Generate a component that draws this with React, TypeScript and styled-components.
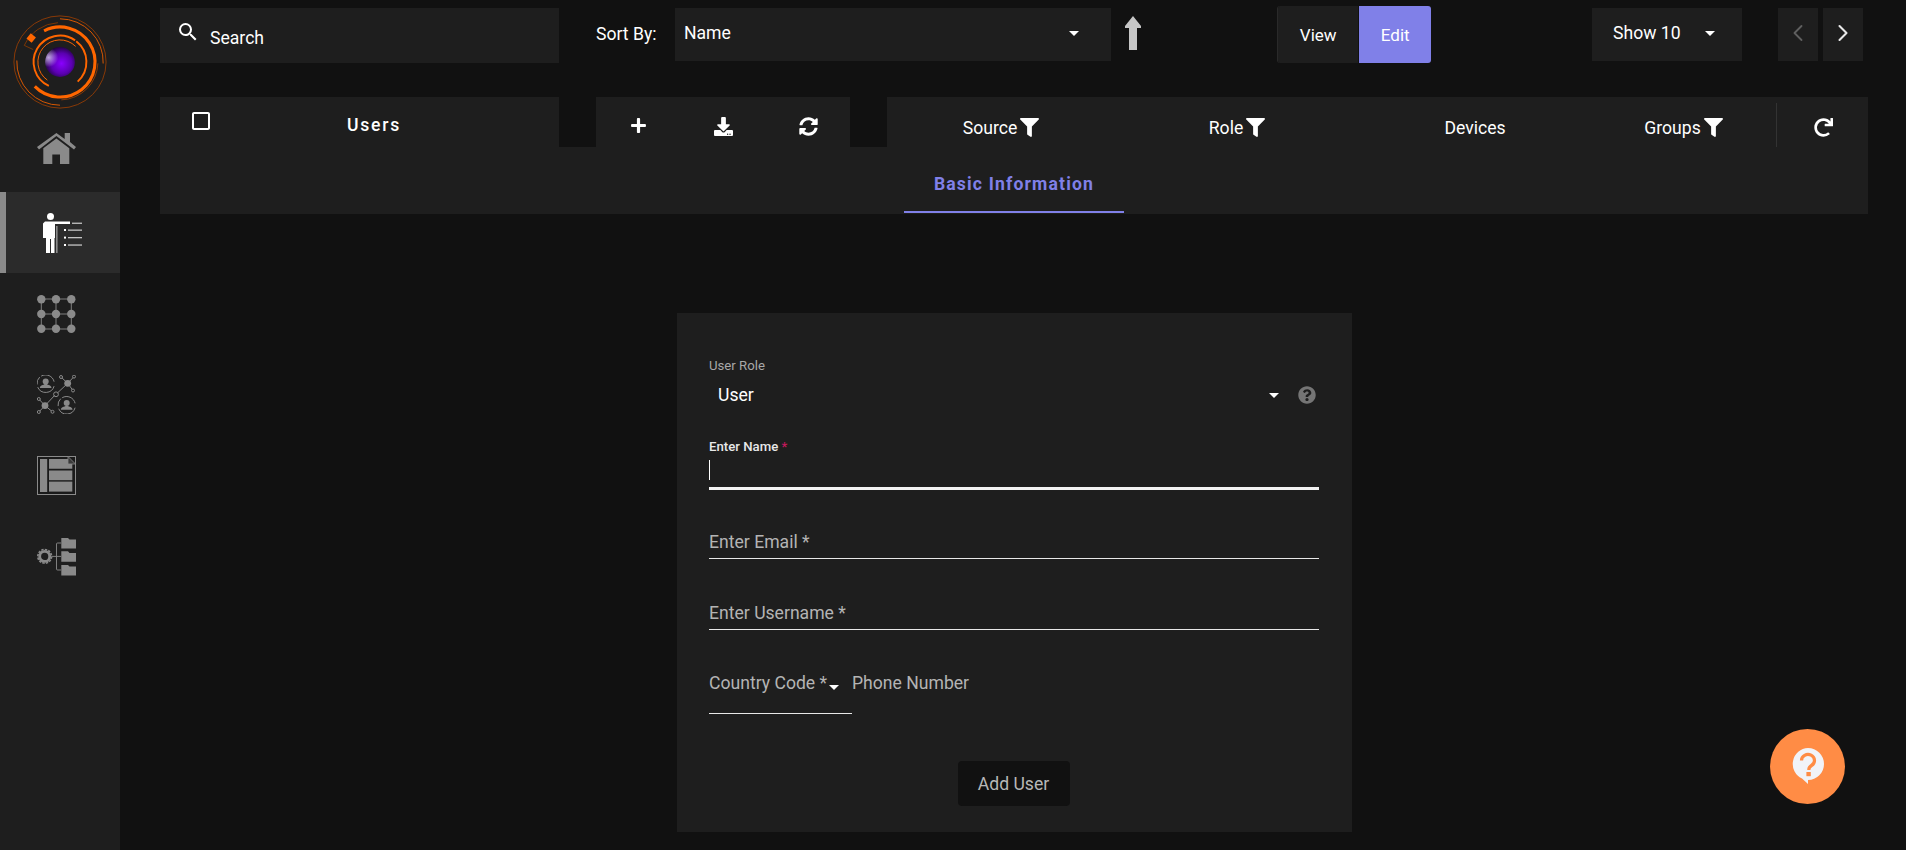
import React from 'react';
import styled, { createGlobalStyle } from 'styled-components';
import { FaDownload, FaFilter, FaPlus, FaQuestionCircle, FaRedo, FaSyncAlt } from 'react-icons/fa';
import { MdArrowDropDown, MdCheckBoxOutlineBlank, MdSearch } from 'react-icons/md';
import { ChevronLeft, ChevronRight } from 'lucide-react';

const GlobalStyle = createGlobalStyle`
	html, body { margin: 0; height: 100%; background: #111111; }
	body { font-family: Roboto, "Liberation Sans", sans-serif; color: #fff; overflow: hidden; }
	* { box-sizing: border-box; }
`;

const Page = styled.div`
	display: flex;
	width: 1906px;
	height: 850px;
`;

const Sidebar = styled.nav`
	width: 120px;
	flex: none;
	background: #1e1e1e;
	display: flex;
	flex-direction: column;
`;

const LogoWrap = styled.div`
	height: 111px;
	padding: 14px 0 0 12px;
`;

const NavItem = styled.div<{ $active?: boolean }>`
	height: 81px;
	display: flex;
	align-items: center;
	padding-left: 37px;
	background: ${({ $active }) => ($active ? '#2b2b2b' : 'transparent')};
	border-left: ${({ $active }) => ($active ? '6px solid #8a8a8a' : 'none')};
`;

const Main = styled.main`
	flex: 1;
	padding: 5px 38px 0 40px;
	display: flex;
	flex-direction: column;
	min-width: 0;
`;

const TopBar = styled.div`
	height: 58px;
	display: flex;
	align-items: center;
`;

const SearchBox = styled.div`
	width: 399px;
	height: 55px;
	margin-top: 2px;
	background: #1e1e1e;
	display: flex;
	align-items: center;
	padding: 0 0 0 16px;
	gap: 10px;
	font-size: 17.6px;
	svg { margin-top: -6px; }
	span { margin-top: 6px; }
`;

const SortLabel = styled.span`
	margin-left: 37px;
	width: 79px;
	font-size: 17.6px;
`;

const Select = styled.div<{ $width: number }>`
	width: ${({ $width }) => $width}px;
	height: 53px;
	background: #1e1e1e;
	display: flex;
	align-items: center;
	justify-content: space-between;
	font-size: 17.6px;
`;

const SortSelect = styled(Select)`
	padding: 0 25px 0 9px;
	span { margin-top: -2px; }
	svg { margin-top: -2px; }
`;

const ShowSelect = styled(Select)`
	margin-left: 161px;
	padding: 0 20px 0 21px;
	span { margin-top: -2px; }
	svg { margin-top: -2px; }
`;

const SortArrow = styled.svg`
	margin-left: 13px;
	margin-top: -2px;
`;

const Toggle = styled.div`
	margin-left: 135px;
	width: 154px;
	height: 57px;
	margin-top: 1px;
	display: flex;
	border-radius: 3px;
	overflow: hidden;
	border-left: 1px solid #2a2a2a;
`;

const ToggleButton = styled.div<{ $on?: boolean }>`
	display: flex;
	align-items: center;
	justify-content: center;
	width: ${({ $on }) => ($on ? '72px' : '81px')};
	margin-left: ${({ $on }) => ($on ? '1px' : '0')};
	background: ${({ $on }) => ($on ? '#8080e8' : '#1e1e1e')};
	font-size: 17px;
`;

const PageButton = styled.div<{ $off?: boolean; $gap: number }>`
	width: 40px;
	height: 53px;
	margin-left: ${({ $gap }) => $gap}px;
	background: #1e1e1e;
	display: flex;
	align-items: center;
	justify-content: center;
	color: ${({ $off }) => ($off ? '#5f5f5f' : '#e8e8e8')};
	svg { margin-top: -2px; }
`;

const HeaderRow = styled.div`
	margin-top: 34px;
	height: 50px;
	display: flex;
`;

const UsersCell = styled.div`
	width: 399px;
	background: #1e1e1e;
	display: flex;
	align-items: flex-start;
	padding: 12px 0 0 29px;
`;

const UsersTitle = styled.span`
	margin-left: 134px;
	margin-top: 6px;
	font-size: 17.6px;
	font-weight: 500;
	letter-spacing: 1.76px;
`;

const ActionCell = styled.div`
	margin-left: 37px;
	width: 254px;
	background: #1e1e1e;
	display: grid;
	grid-template-columns: repeat(3, 85px);
	justify-items: center;
	padding: 20px 0 0 0;
	align-content: start;
`;

const ColumnCell = styled.div`
	margin-left: 37px;
	flex: 1;
	background: #1e1e1e;
	display: flex;
`;

const Column = styled.div<{ $width: number }>`
	width: ${({ $width }) => $width}px;
	display: flex;
	justify-content: center;
	align-items: flex-start;
	padding-top: 21px;
	gap: 3px;
	font-size: 17.6px;
	line-height: 20px;
`;

const RefreshCell = styled.div`
	margin-top: 6px;
	height: 44px;
	width: 92px;
	border-left: 1px solid #333;
	padding: 15px 0 0 37px;
`;

const TabPanel = styled.div`
	height: 67px;
	background: #1e1e1e;
	display: flex;
	justify-content: center;
	margin-bottom: 99px;
`;

const Tab = styled.div`
	width: 220px;
	height: 66px;
	text-align: center;
	font-size: 17.6px;
	font-weight: 700;
	letter-spacing: 1.15px;
	color: #8080e8;
	padding-top: 27px;
	line-height: 20px;
	border-bottom: 2px solid #8080e8;
`;

const FormCard = styled.form`
	align-self: flex-start;
	margin-left: 517px;
	width: 675px;
	height: 519px;
	background: #1e1e1e;
	padding: 46px 33px 0 32px;
	display: flex;
	flex-direction: column;
`;

const SmallLabel = styled.div<{ $bright?: boolean }>`
	font-size: 13.2px;
	line-height: 14px;
	color: ${({ $bright }) => ($bright ? '#e8e8e8' : '#a8a8a8')};
	font-weight: ${({ $bright }) => ($bright ? 500 : 400)};
	em { font-style: normal; color: #c2185b; }
`;

const RoleRow = styled.div`
	margin-top: 6px;
	height: 32px;
	display: flex;
	align-items: center;
	padding-left: 9px;
	font-size: 17.6px;
`;

const RoleValue = styled.span`
	flex: 1;
`;

const HelpIcon = styled(FaQuestionCircle)`
	color: #757575;
	margin-left: 12px;
	margin-right: 3px;
`;

const NameField = styled.div`
	margin-top: 29px;
`;

const NameInput = styled.div`
	height: 31px;
	margin-top: 5px;
	border-bottom: 3px solid #f2f2f2;
	padding-top: 1px;
	&::before {
		content: '';
		display: block;
		width: 1px;
		height: 20px;
		background: #fff;
	}
`;

const Field = styled.div<{ $top: number }>`
	margin-top: ${({ $top }) => $top}px;
	height: 33px;
	font-size: 17.6px;
	line-height: 20px;
	padding-top: 6px;
	color: #b4b4b4;
	border-bottom: 1px solid #e8e8e8;
`;

const PhoneRow = styled.div`
	margin-top: 34px;
	display: flex;
	font-size: 17.6px;
	line-height: 20px;
	color: #b4b4b4;
`;

const CountryField = styled.div`
	width: 143px;
	height: 50px;
	border-bottom: 1px solid #e8e8e8;
	padding-top: 9px;
	display: flex;
	align-items: flex-start;
	white-space: nowrap;
	svg { margin: 2px 0 0 -5px; color: #fff; flex: none; }
`;

const PhoneLabel = styled.span`
	padding-top: 9px;
`;

const AddButton = styled.button`
	align-self: center;
	margin-top: 47px;
	margin-left: -1px;
	width: 112px;
	height: 45px;
	background: #111111;
	border: none;
	border-radius: 4px;
	color: #b8b8b8;
	font: 400 17.6px Roboto, sans-serif;
`;

const HelpBubble = styled.div`
	position: fixed;
	left: 1770px;
	top: 729px;
	width: 75px;
	height: 75px;
	border-radius: 50%;
	background: #ff8c45;
	display: flex;
	align-items: center;
	justify-content: center;
`;

// arc path, angles in degrees clockwise from the top
const arc = (r: number, from: number, to: number) => {
	const pt = (a: number) => {
		const t = ((a - 90) * Math.PI) / 180;
		return `${(50 + r * Math.cos(t)).toFixed(2)} ${(50 + r * Math.sin(t)).toFixed(2)}`;
	};
	return `M${pt(from)} A${r} ${r} 0 ${to - from > 180 ? 1 : 0} 1 ${pt(to)}`;
};

const Logo = () => (
	<svg width="96" height="96" viewBox="0 0 100 100" fill="none">
		<defs>
			<radialGradient id="ball" cx="55%" cy="55%" r="58%">
				<stop offset="0%" stopColor="#8a00ff" />
				<stop offset="60%" stopColor="#5a00b0" />
				<stop offset="100%" stopColor="#1c0435" />
			</radialGradient>
			<radialGradient id="shine" cx="12%" cy="35%" r="32%">
				<stop offset="0%" stopColor="#e0d0ff" stopOpacity="0.8" />
				<stop offset="100%" stopColor="#e0d0ff" stopOpacity="0" />
			</radialGradient>
		</defs>
		<circle cx="50" cy="50" r="48" stroke="#a84200" strokeWidth="0.8" />
		<path d={arc(45, 0, 92)} stroke="#e05a00" strokeWidth="1" />
		<path d={arc(45, 180, 272)} stroke="#e05a00" strokeWidth="1" />
		<path d={arc(39.5, 92, 178)} stroke="#a84200" strokeWidth="0.8" />
		<path d={arc(36.5, -27, 226)} stroke="#ff6600" strokeWidth="3.2" />
		<path d={arc(41, -65, -3)} stroke="#8a3a00" strokeWidth="0.9" />
		<path d="M12.8 32.7 L22 37" stroke="#8a3a00" strokeWidth="0.9" />
		<rect x="16.5" y="21.5" width="7" height="7" fill="#ff6600" transform="rotate(40 20 25)" />
		<path d={arc(27.5, 205, 395)} stroke="#ff6600" strokeWidth="2" />
		<path d={arc(23, 215, 405)} stroke="#ff6600" strokeWidth="1" />
		<path d={arc(27.5, 38, 138)} stroke="#ff6600" strokeWidth="2" />
		<circle cx="50" cy="50" r="15.5" fill="url(#ball)" />
		<circle cx="50" cy="50" r="15.5" fill="url(#shine)" />
	</svg>
);

const HomeIcon = () => (
	<svg width="39" height="31" viewBox="0 0 39 31" fill="#8a8a8a" style={{ marginTop: -7 }}>
		<path d="M27.7 0 H33 V9 L39 14 L37 16.5 L19.4 2.9 L2 16.5 L0 14 L19.4 0 L27.7 6 Z" />
		<path d="M19.4 5.5 L32.3 15.3 V31 H23 V21.5 H15.3 V31 H6.3 V15.3 Z" />
	</svg>
);

const PersonIcon = () => (
	<svg width="39" height="40" viewBox="0 0 39 40">
		<circle cx="7.5" cy="3.6" r="3.5" fill="#fff" />
		<path d="M2 8.5 H27 V11 H12 V25 H11.5 V40 H8 V26 H7 V40 H3 V25 H0 V10.5 Z" fill="#fff" />
		<rect x="13" y="13" width="1.6" height="27" fill="#8a8a8a" />
		<g fill="#c4c4c4">
			<rect x="29" y="9.6" width="10" height="1.3" />
			<rect x="25" y="16.5" width="14" height="1.3" />
			<rect x="25" y="24" width="14" height="1.3" />
			<rect x="25" y="31.4" width="14" height="1.3" />
		</g>
		<g fill="#fff">
			<rect x="21" y="16" width="2" height="2" />
			<rect x="21" y="23.6" width="2" height="2" />
			<rect x="21" y="31" width="2" height="2" />
		</g>
	</svg>
);

const GridIcon = () => (
	<svg width="39" height="38" viewBox="0 0 39 38" fill="#8a8a8a" stroke="#8a8a8a">
		<path d="M4.3 4 H34.3 M4.3 19 H34.3 M4.3 34 H34.3 M4.3 4 V34 M19 4 V34 M34.3 4 V34" strokeWidth="0.9" fill="none" />
		{[4.3, 19, 34.3].map((x) =>
			[4.3, 19, 33.7].map((y) => <circle key={`${x}-${y}`} cx={x} cy={y} r="4.2" stroke="none" />),
		)}
	</svg>
);

const Spoke = ({ x, y, tx, ty }: { x: number; y: number; tx: number; ty: number }) => (
	<>
		<path d={`M${x} ${y} L${tx} ${ty}`} />
		<circle cx={tx} cy={ty} r="1.5" fill="#1e1e1e" />
	</>
);

const Buddy = ({ x, y }: { x: number; y: number }) => (
	<g transform={`translate(${x} ${y})`}>
		<path d="M-4.5 -7.6 A8.7 8.7 0 0 1 8.4 -2 M8.4 2.4 A8.7 8.7 0 0 1 -8 3.4 M-8.6 0.8 A8.7 8.7 0 0 1 -6 -6.6" />
		<circle cx="0" cy="-2.2" r="3" fill="#8a8a8a" stroke="none" />
		<path d="M-5.8 4.4 C-5.8 1.4 -2 1.6 -1.2 0.4 H1.2 C2 1.6 5.8 1.4 5.8 4.4 Z" fill="#8a8a8a" stroke="none" />
	</g>
);

const NetworkIcon = () => (
	<svg width="39" height="39" viewBox="0 0 39 39" fill="none" stroke="#8a8a8a" strokeWidth="1">
		<Buddy x={8.7} y={8.7} />
		<Buddy x={29.7} y={30.3} />
		<path d="M8 30.6 L17.7 20.4 M20.4 18 L30.7 8.3" />
		<circle cx="19" cy="19.3" r="2.4" />
		<Spoke x={30.7} y={8.3} tx={24} ty={2} />
		<Spoke x={30.7} y={8.3} tx={37} ty={1.6} />
		<Spoke x={30.7} y={8.3} tx={36} ty={15.5} />
		<Spoke x={8} y={30.6} tx={1.8} ty={24} />
		<Spoke x={8} y={30.6} tx={1.8} ty={37} />
		<Spoke x={8} y={30.6} tx={15.5} ty={36.8} />
		<circle cx="30.7" cy="8.3" r="3.4" fill="#8a8a8a" stroke="none" />
		<circle cx="8" cy="30.6" r="3.4" fill="#8a8a8a" stroke="none" />
	</svg>
);

const LayoutIcon = () => (
	<svg width="39" height="39" viewBox="0 0 39 39">
		<rect x="0.5" y="0.5" width="38" height="38" fill="#1a1a1a" stroke="#8a8a8a" />
		<g fill="#8a8a8a">
			<rect x="3" y="3" width="7.2" height="33" />
			<path d="M12 3 H31 V8 H35.3 V12.7 H12 Z" />
			<rect x="12" y="14.5" width="23.3" height="9.7" />
			<rect x="12" y="25.6" width="23.3" height="10" />
		</g>
		<path d="M31 0.5 L38.5 8 H31 Z" fill="#3a3a3a" stroke="#8a8a8a" strokeWidth="0.8" />
	</svg>
);

const Folder = ({ y }: { y: number }) => (
	<path d={`M24.3 ${y} H31 L32.5 ${y + 1.6} H39 V${y + 10.5} H24.3 Z`} fill="#8a8a8a" />
);

const ConfigIcon = () => (
	<svg width="39" height="38" viewBox="0 0 39 38" fill="none">
		<circle cx="7.7" cy="18.4" r="5" stroke="#8a8a8a" strokeWidth="2.8" />
		<circle cx="7.7" cy="18.4" r="6.9" stroke="#8a8a8a" strokeWidth="1.6" strokeDasharray="2.4 1.2" />
		<path d="M24 5 H20.5 Q19.5 5 19.5 6 V31 Q19.5 32 20.5 32 H24 M14.5 18.4 H24" stroke="#8a8a8a" strokeWidth="0.9" />
		<Folder y={0} />
		<Folder y={13.3} />
		<Folder y={27} />
	</svg>
);

const BubbleIcon = () => (
	<svg width="34" height="38" viewBox="0 0 34 38">
		<path d="M17 1 A16 16 0 0 1 17 33 V37 L11 31.5 A16 16 0 0 1 17 1 Z" fill="#f1f3f8" transform="translate(0 -1)" />
		<path d="M10.5 12.5 A6.5 6 0 1 1 20.5 17.5 C18 19 17.8 20 17.8 22" fill="none" stroke="#ff8c45" strokeWidth="3.2" />
		<rect x="15.4" y="24" width="4.4" height="4.2" fill="#ff8c45" />
	</svg>
);

const SortUp = () => (
	<SortArrow width="18" height="34" viewBox="0 0 18 34">
		<path d="M9 0 L17 10 V12 H13 V34 H5 V12 H1 V10 Z" fill="#c6c6c6" />
	</SortArrow>
);

const FilterColumn = ({ label, width }: { label: string; width: number }) => (
	<Column $width={width}>
		{label}
		<FaFilter size={19} />
	</Column>
);

export default function App() {
	return (
		<Page>
			<GlobalStyle />
			<Sidebar>
				<LogoWrap>
					<Logo />
				</LogoWrap>
				<NavItem><HomeIcon /></NavItem>
				<NavItem $active><PersonIcon /></NavItem>
				<NavItem><GridIcon /></NavItem>
				<NavItem><NetworkIcon /></NavItem>
				<NavItem><LayoutIcon /></NavItem>
				<NavItem><ConfigIcon /></NavItem>
			</Sidebar>
			<Main>
				<TopBar>
					<SearchBox>
						<MdSearch size={24} color="#fff" />
						<span>Search</span>
					</SearchBox>
					<SortLabel>Sort By:</SortLabel>
					<SortSelect $width={436}>
						<span>Name</span>
						<MdArrowDropDown size={24} />
					</SortSelect>
					<SortUp />
					<Toggle>
						<ToggleButton>View</ToggleButton>
						<ToggleButton $on>Edit</ToggleButton>
					</Toggle>
					<ShowSelect $width={150}>
						<span>Show 10</span>
						<MdArrowDropDown size={24} />
					</ShowSelect>
					<PageButton $off $gap={36}><ChevronLeft size={28} strokeWidth={1.6} /></PageButton>
					<PageButton $gap={5}><ChevronRight size={28} strokeWidth={1.8} /></PageButton>
				</TopBar>
				<HeaderRow>
					<UsersCell>
						<MdCheckBoxOutlineBlank size={24} />
						<UsersTitle>Users</UsersTitle>
					</UsersCell>
					<ActionCell>
						<FaPlus size={17} />
						<FaDownload size={19} />
						<FaSyncAlt size={19} />
					</ActionCell>
					<ColumnCell>
						<FilterColumn label="Source" width={228} />
						<FilterColumn label="Role" width={244} />
						<Column $width={232}>Devices</Column>
						<FilterColumn label="Groups" width={185} />
						<RefreshCell><FaRedo size={19} /></RefreshCell>
					</ColumnCell>
				</HeaderRow>
				<TabPanel>
					<Tab>Basic Information</Tab>
				</TabPanel>
				<FormCard>
					<SmallLabel>User Role</SmallLabel>
					<RoleRow>
						<RoleValue>User</RoleValue>
						<MdArrowDropDown size={24} />
						<HelpIcon size={18} />
					</RoleRow>
					<NameField>
						<SmallLabel $bright>Enter Name <em>*</em></SmallLabel>
						<NameInput />
					</NameField>
					<Field $top={36}>Enter Email *</Field>
					<Field $top={38}>Enter Username *</Field>
					<PhoneRow>
						<CountryField>
							Country Code *
							<MdArrowDropDown size={24} />
						</CountryField>
						<PhoneLabel>Phone Number</PhoneLabel>
					</PhoneRow>
					<AddButton type="button">Add User</AddButton>
				</FormCard>
			</Main>
			<HelpBubble><BubbleIcon /></HelpBubble>
		</Page>
	);
}
